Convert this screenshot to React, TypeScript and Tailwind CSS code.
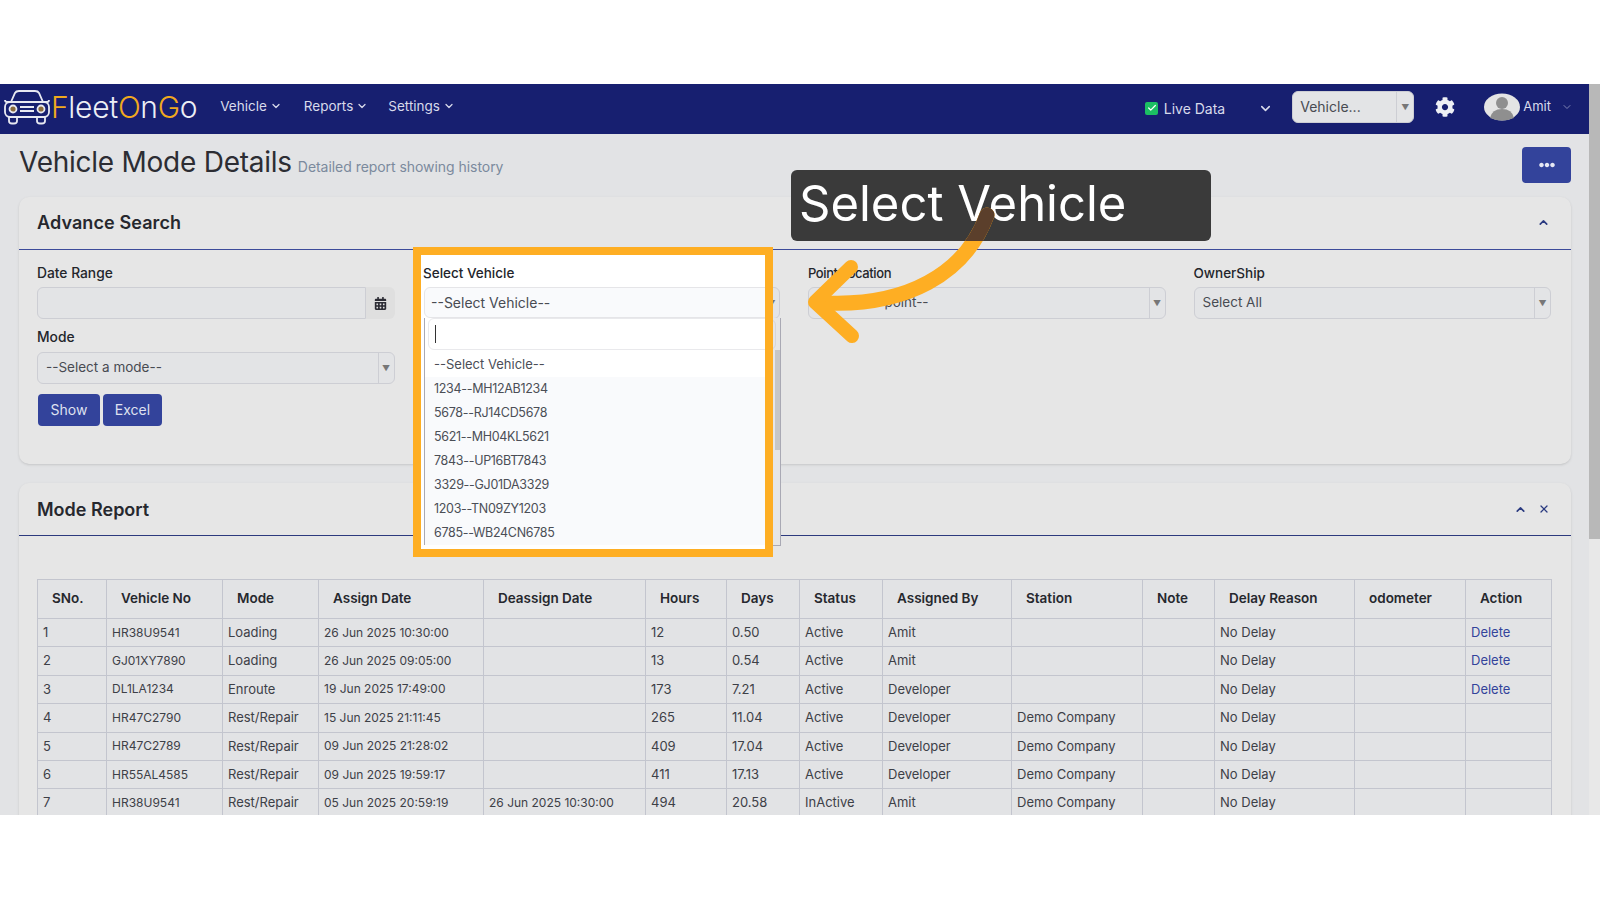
import React from 'react';
import { ChevronDown, ChevronUp, X, Check } from 'lucide-react';
import { FaCalendarAlt, FaCog, FaEllipsisH } from 'react-icons/fa';

const vehicles = [
  '1234--MH12AB1234',
  '5678--RJ14CD5678',
  '5621--MH04KL5621',
  '7843--UP16BT7843',
  '3329--GJ01DA3329',
  '1203--TN09ZY1203',
  '6785--WB24CN6785',
];

const rows = [
  ['1', 'HR38U9541', 'Loading', '26 Jun 2025 10:30:00', '', '12', '0.50', 'Active', 'Amit', '', '', 'No Delay', '', 'Delete'],
  ['2', 'GJ01XY7890', 'Loading', '26 Jun 2025 09:05:00', '', '13', '0.54', 'Active', 'Amit', '', '', 'No Delay', '', 'Delete'],
  ['3', 'DL1LA1234', 'Enroute', '19 Jun 2025 17:49:00', '', '173', '7.21', 'Active', 'Developer', '', '', 'No Delay', '', 'Delete'],
  ['4', 'HR47C2790', 'Rest/Repair', '15 Jun 2025 21:11:45', '', '265', '11.04', 'Active', 'Developer', 'Demo Company', '', 'No Delay', '', ''],
  ['5', 'HR47C2789', 'Rest/Repair', '09 Jun 2025 21:28:02', '', '409', '17.04', 'Active', 'Developer', 'Demo Company', '', 'No Delay', '', ''],
  ['6', 'HR55AL4585', 'Rest/Repair', '09 Jun 2025 19:59:17', '', '411', '17.13', 'Active', 'Developer', 'Demo Company', '', 'No Delay', '', ''],
  ['7', 'HR38U9541', 'Rest/Repair', '05 Jun 2025 20:59:19', '26 Jun 2025 10:30:00', '494', '20.58', 'InActive', 'Amit', 'Demo Company', '', 'No Delay', '', ''],
];

const headers = ['SNo.', 'Vehicle No', 'Mode', 'Assign Date', 'Deassign Date', 'Hours', 'Days', 'Status', 'Assigned By', 'Station', 'Note', 'Delay Reason', 'odometer', 'Action'];

const SelectBox = ({ text }: { text: string }) => (
  <div className="flex h-8 items-center rounded-md border border-[#cdced4] bg-[#e3e4e6] text-[13.5px] text-[#484b52]">
    <span className="flex-1 truncate pb-px pl-2">{text}</span>
    <span className="flex h-full w-4 items-center justify-center border-l border-[#cdced4] text-[8px] text-[#777]">▼</span>
  </div>
);

const Label = ({ children, className = '' }: { children?: React.ReactNode; className?: string }) => (
  <div className={`mb-[4px] h-5 leading-5 font-medium text-[#23252b] ${className || 'text-[13.8px]'}`}>{children}</div>
);

const CarLogo = () => (
  <svg width="48" height="36" viewBox="0 0 48 36" fill="none" stroke="#e8e9f2" strokeWidth="1.8" className="shrink-0">
    <path d="M8 13 L12 4 Q13 2 16 2 H32 Q35 2 36 4 L40 13" />
    <path d="M8 13 H4 Q2 13 2 11 M40 13 H44 Q46 13 46 11" />
    <rect x="2" y="13" width="44" height="15" rx="5" />
    <path d="M6 28 V32 Q6 34.500 9 34.500 H11 Q14 34.500 14 32 V28 M34 28 V32 Q34 34.500 37 34.500 H39 Q42 34.500 42 32 V28" />
    <circle cx="10" cy="20" r="3.500" fill="#8a6a3c" />
    <circle cx="38" cy="20" r="3.500" fill="#8a6a3c" />
    <path d="M17 18 H31 M17 22 H31" />
  </svg>
);

const NavItem = ({ text, className }: { text: string; className: string }) => (
  <div className={`flex -translate-y-px items-center gap-[3px] text-[13.5px] text-[#d8daeb] ${className}`}>
    {text}
    <ChevronDown size={12} strokeWidth={2.5} />
  </div>
);

const Navbar = () => (
  <div className="flex h-[50px] shrink-0 items-center bg-[#171f70] pb-1">
    <div className="ml-[3px] flex items-center">
      <CarLogo />
      <div className="text-[30px] font-light tracking-[-0.3px] text-[#eceef5]">
        <span className="text-[#f0a91e]">F</span>leet<span className="text-[#f0a91e]">O</span>n<span className="text-[#f0a91e]">G</span>o
      </div>
    </div>
    <NavItem text="Vehicle" className="ml-[23px]" />
    <NavItem text="Reports" className="ml-[22px]" />
    <NavItem text="Settings" className="ml-5" />
    <div className="ml-auto flex h-5 w-[14px] translate-y-[1px] items-center justify-center">
      <span className="flex h-[13px] w-[13px] items-center justify-center rounded-[2px] bg-[#1cbf63]">
        <Check size={10} color="#fff" strokeWidth={3} />
      </span>
    </div>
    <span className="ml-[5px] translate-y-[1px] text-[14px] text-[#d8daeb]">Live Data</span>
    <ChevronDown size={15} strokeWidth={2.5} className="ml-[33px] translate-y-[1px] text-[#d8daeb]" />
    <div className="ml-[19px] flex h-8 w-[122px] items-center rounded-md border border-[#cdced4] bg-[#e3e4e6] text-[14px] text-[#484b52]">
      <span className="flex-1 pb-px pl-[7px]">Vehicle...</span>
      <span className="flex h-full w-[17px] items-center justify-center border-l border-[#cdced4] text-[8px] text-[#777]">▼</span>
    </div>
    <FaCog size={20} className="ml-[21px] text-[#eef0f5]" />
    <svg width="36" height="28" viewBox="0 0 36 28" className="ml-[29px]">
      <ellipse cx="18" cy="14" rx="18" ry="13.500" fill="#e4e4e4" />
      <circle cx="18" cy="10" r="6" fill="#8f8f8f" />
      <path d="M6 25 Q8 16 18 16 Q28 16 30 25 Q18 30 6 25 Z" fill="#8f8f8f" />
    </svg>
    <span className="ml-[3px] text-[13px] text-[#d8daeb]">Amit</span>
    <ChevronDown size={12} className="mr-[16px] ml-[10px] text-[#7e84b4]" />
  </div>
);

const SearchCard = () => (
  <div className="h-[267px] rounded-[10px] bg-[#e6e6e6] shadow-sm">
    <div className="flex h-[53px] items-center justify-between border-b border-[#3d4b9a] pr-[21px] pb-[2px] pl-[18px]">
      <div className="text-[18px] font-semibold tracking-[0.1px] text-[#26282e]">Advance Search</div>
      <ChevronUp size={13} strokeWidth={3} className="text-[#2a3a80]" />
    </div>
    <div className="grid grid-cols-4 gap-x-7 pt-[13px] pr-5 pl-[18px]">
      <div>
        <Label>Date Range</Label>
        <div className="flex h-8">
          <div className="flex-1 rounded-l-md border border-[#cdced4] bg-[#e3e4e6]" />
          <div className="flex w-[29px] items-center justify-center rounded-r-md bg-[#dfdfdf] text-[#2c2c34]">
            <FaCalendarAlt size={13} />
          </div>
        </div>
        <div className="mt-[8px]">
          <Label className="mb-[5px] text-[13.8px]">Mode</Label>
        </div>
        <SelectBox text="--Select a mode--" />
        <div className="mt-[10px] flex gap-[3px] pl-[1px]">
          <button className="h-8 w-[62px] rounded-[4px] bg-[#33439b] pb-[2px] text-[14px] text-[#dfe1f0]">Show</button>
          <button className="h-8 w-[59px] rounded-[4px] bg-[#33439b] pb-[2px] text-[14px] text-[#dfe1f0]">Excel</button>
        </div>
      </div>
      <div>
        {/* label and text of this column sit in the highlighted box on top */}
        <Label />
        <SelectBox text="" />
      </div>
      <div>
        <Label className="text-[13px] tracking-[-0.4px]">Point Location</Label>
        <SelectBox text="--Select a point--" />
      </div>
      <div>
        <Label className="text-[13.5px]">OwnerShip</Label>
        <SelectBox text="Select All" />
      </div>
    </div>
  </div>
);

const ReportCard = () => (
  <div className="mt-[19px] rounded-t-[10px] bg-[#e6e6e6] pb-6 shadow-sm">
    <div className="flex h-[53px] items-center border-b border-[#2d3a7e] pr-[21px] pl-[18px]">
      <div className="text-[18px] font-semibold text-[#26282e]">Mode Report</div>
      <ChevronUp size={13} strokeWidth={3} className="ml-auto text-[#2a3a80]" />
      <X size={12} strokeWidth={2.5} className="ml-[11px] text-[#2a3a80]" />
    </div>
    <div className="pt-[43px] pl-[18px]">
      <table className="w-[1514px] table-fixed border-collapse bg-[#e2e3e5] text-[13px] text-[#3d4047]">
        <colgroup>
          <col className="w-[69px]" />
          <col className="w-[116px]" />
          <col className="w-[96px]" />
          <col className="w-[165px]" />
          <col className="w-[162px]" />
          <col className="w-[81px]" />
          <col className="w-[73px]" />
          <col className="w-[83px]" />
          <col className="w-[129px]" />
          <col className="w-[131px]" />
          <col className="w-[72px]" />
          <col className="w-[140px]" />
          <col className="w-[111px]" />
          <col className="w-[86px]" />
        </colgroup>
        <thead>
          <tr className="h-[39px]">
            {headers.map((h) => (
              <th key={h} className="border border-[#c3c5ce] pb-[2px] pl-[14px] text-left text-[13.5px] font-semibold text-[#26282e]">{h}</th>
            ))}
          </tr>
        </thead>
        <tbody>
          {rows.map((row) => (
            <tr key={row[0]} className="h-[28.4px]">
              {row.map((cell, i) => (
                <td
                  key={i}
                  className={`truncate border border-[#c3c5ce] pl-[5px] ${i === 1 || i === 3 || i === 4 ? 'text-[12px]' : ''} ${cell === 'Delete' ? 'text-[#33439b]' : ''}`}
                >
                  {cell}
                </td>
              ))}
            </tr>
          ))}
        </tbody>
      </table>
    </div>
  </div>
);

// dimmed part of the open dropdown, sticks out to the right of the orange box
const DimDropdown = () => (
  <div className="absolute top-[318px] left-[424px] z-10 h-[228px] w-[357px] border border-t-0 border-[#a9a9b4] bg-[#e6e6e6]">
    <div className="absolute top-[32px] right-0 h-[100px] w-[5px] bg-[#c6c6c6]" />
    <div className="mt-[1px] ml-[4px] h-[31px] w-[347px] rounded-md border border-[#d6d6da]" />
  </div>
);

const Spotlight = () => (
  <div className="absolute top-[247px] left-[413px] z-20 h-[310px] w-[360px] overflow-hidden border-8 border-[#feae23] bg-white">
    <div className="w-[356px] pt-[8px] pl-[2px]">
      <Label className="text-[13.5px]">Select Vehicle</Label>
      <div className="ml-[1px] flex h-[31px] items-center rounded-md border border-[#e5e5e8] bg-[#f9fafc] pb-px pl-[6px] text-[14px] text-[#484b52]">--Select Vehicle--</div>
      <div className="ml-[1px] h-[227px] border-x border-b border-[#a9a9b4] bg-white">
        <div className="ml-[3px] flex h-[32px] items-center rounded-md border border-[#e9e9ec] pl-[6px]">
          <div className="h-[18px] w-px bg-[#333]" />
        </div>
        <div className="flex h-[27px] items-center pt-[3px] pl-[9px] text-[13px] text-[#4b4e56]">--Select Vehicle--</div>
        <div className="bg-[#f9fafc]">
          {vehicles.map((v) => (
            <div key={v} className="flex h-[24px] items-center pl-[9px] text-[12.500px] tracking-[-0.3px] text-[#4b4e56]">{v}</div>
          ))}
        </div>
      </div>
    </div>
  </div>
);

const Callout = () => (
  <>
    <div className="absolute top-[170px] left-[791px] z-30 flex h-[71px] w-[420px] items-center rounded-md bg-[#3a3a3a] pb-1 pl-2 text-[49px] text-white">
      Select Vehicle
    </div>
    <svg className="absolute top-0 left-0 z-40" width="1600" height="900" fill="none" strokeLinecap="round" strokeLinejoin="round">
      <defs>
        <clipPath id="overBox">
          <rect x="900" y="170" width="200" height="71" />
        </clipPath>
      </defs>
      <path d="M987 215 C965 275 905 306 827 303" stroke="#feae23" strokeWidth="15" />
      <path d="M987 215 C965 275 905 306 827 303" stroke="#5b3f2b" strokeWidth="15" clipPath="url(#overBox)" />
      <path d="M851 267 L815 302 L852 336" stroke="#feae23" strokeWidth="14" />
    </svg>
  </>
);

export default function App() {
  return (
    <div className="relative h-[900px] w-[1600px] overflow-hidden bg-white font-['Inter','Noto_Sans',sans-serif]">
      <div className="h-[84px]" />
      <div className="flex h-[731px] overflow-hidden">
        <div className="flex min-w-0 flex-1 flex-col bg-[#e2e3e5]">
          <Navbar />
          <div className="pr-[18px] pl-[19px]">
            <div className="flex h-[63px] items-start justify-between pt-[13px]">
              <div className="flex -translate-y-[3px] items-baseline gap-[6px]">
                <span className="text-[28px] leading-[36px] tracking-[-0.25px] text-[#2c2d33]">Vehicle Mode Details</span>
                <span className="text-[14px] tracking-[-0.05px] text-[#7b8a9d]">Detailed report showing history</span>
              </div>
              <button className="flex h-9 w-[49px] items-center justify-center rounded-[4px] bg-[#33439b] text-[#e6e8f4]">
                <FaEllipsisH size={16} />
              </button>
            </div>
            <SearchCard />
            <ReportCard />
          </div>
        </div>
        <div className="flex w-[11px] flex-col bg-[#e8e8e8]">
          <div className="h-[455px] bg-[#b8b8b8]" />
        </div>
      </div>
      <DimDropdown />
      <Spotlight />
      <Callout />
    </div>
  );
}
